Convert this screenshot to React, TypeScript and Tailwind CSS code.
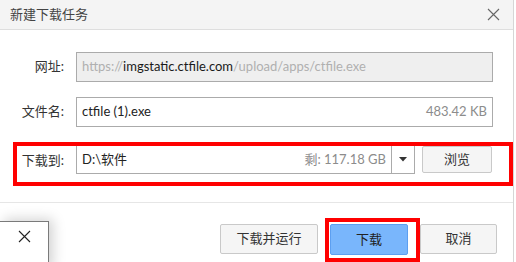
const font = "font-['Lato','Noto_Sans_CJK_SC',sans-serif]";

const Label = ({ text }: { text: string }) => (
  <div className="w-[76px] shrink-0 pr-[12px] text-right text-[13px] text-[#333]">{text}</div>
);

const CloseIcon = ({ className }: { className?: string }) => (
  <svg width="13" height="13" viewBox="0 0 13 13" className={className}>
    <path d="M1 1 L12 12 M12 1 L1 12" stroke="currentColor" strokeWidth="1.1" fill="none" />
  </svg>
);

const App = () => {
  return (
    <div className={`relative w-[516px] h-[262px] overflow-hidden bg-white ${font}`}>
      <div className="w-[514px] h-full border-r border-[#d6d6d6]">
        {/* title */}
        <div className="flex items-center justify-between h-[30px] bg-[#f4f4f4] border-b border-[#dedede] pl-[10px] pr-[13px]">
          <span className="text-[13px] text-[#444] leading-none">新建下载任务</span>
          <CloseIcon className="text-[#666]" />
        </div>

        {/* url */}
        <div className="flex items-center mt-[22px]">
          <Label text="网址:" />
          <div className="flex items-center w-[417px] h-[30px] px-[5px] bg-[#efefef] border border-[#ababab] text-[13px] whitespace-nowrap overflow-hidden">
            <span className="text-[#b0b0b0]">https://</span>
            <span className="text-[#1a1a1a]">imgstatic.ctfile.com</span>
            <span className="text-[#b0b0b0]">/upload/apps/ctfile.exe</span>
          </div>
        </div>

        {/* filename */}
        <div className="flex items-center mt-[15px]">
          <Label text="文件名:" />
          <div className="flex items-center justify-between w-[417px] h-[30px] px-[5px] bg-white border border-[#ababab] text-[13px]">
            <span className="text-[#222]">ctfile (1).exe</span>
            <span className="text-[#8c8c8c]">483.42 KB</span>
          </div>
        </div>

        {/* save to */}
        <div className="ml-[13px] mt-[15px] w-[500px] h-[44px] border-[4px] border-[#ff0000] flex items-start">
          <div className="w-[59px] shrink-0 pr-[12px] pt-[5px] text-right text-[13px] text-[#333]">下载到:</div>
          <div className="flex w-[339px] h-[28px] border border-[#ababab] border-t-0 bg-white">
            <div className="flex-1 flex items-center justify-between px-[5px] text-[13px]">
              <span className="text-[#222]">D:\软件</span>
              <span className="text-[#8c8c8c]">剩: 117.18 GB</span>
            </div>
            <div className="w-[23px] border-l border-[#ababab] flex items-center justify-center">
              <svg width="8" height="5" viewBox="0 0 8 5">
                <path d="M0 0 H8 L4 4.5 Z" fill="#333" />
              </svg>
            </div>
          </div>
          <button className="ml-[7px] w-[70px] h-[27px] bg-[#f5f5f5] border border-[#c9c9c9] rounded-[2px] text-[13px] text-[#333]">
            浏览
          </button>
        </div>

        {/* separator */}
        <div className="mt-[16px] h-px bg-[#e6e6e6]" />

        {/* footer */}
        <div className="flex items-start justify-end pr-[16px] mt-[15px]">
          <button className="mt-[6px] w-[98px] h-[30px] bg-[#f5f5f5] border border-[#c9c9c9] rounded-[2px] text-[13px] text-[#333]">
            下载并运行
          </button>
          <div className="ml-[7px] w-[95px] h-[44px] border-[4px] border-[#ff0000] pl-[1px] pt-[2px]">
            <button className="w-[78px] h-[31px] bg-[#79b6fc] border border-[#5d9ff0] rounded-[2px] text-[13px] text-[#222]">
              下载
            </button>
          </div>
          <button className="mt-[6px] w-[77px] h-[30px] bg-[#f5f5f5] border border-[#c9c9c9] rounded-[2px] text-[13px] text-[#333]">
            取消
          </button>
        </div>
      </div>

      {/* overlapping popup in corner */}
      <div className="absolute left-0 top-[221px] w-[49px] h-[50px] bg-white border-t border-r border-[#7a7a7a] shadow-[4px_-2px_12px_rgba(0,0,0,0.18)] flex justify-center pt-[8px]">
        <CloseIcon className="text-[#222]" />
      </div>
    </div>
  );
};

export default App;
